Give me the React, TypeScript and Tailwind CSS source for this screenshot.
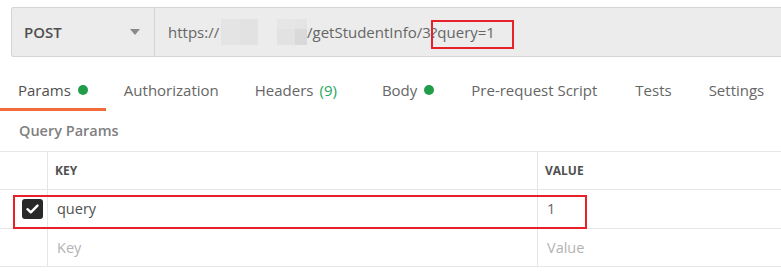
import React from 'react';

const tabs: { label: string; extra?: React.ReactNode; active?: boolean; ml?: string }[] = [
  { label: 'Params', extra: <span className="ml-[7px] inline-block w-[10px] h-[10px] rounded-full bg-[#219c48]" />, active: true },
  { label: 'Authorization' },
  { label: 'Headers', extra: <span className="ml-[6px] text-[#26a65b]">(9)</span> },
  { label: 'Body', extra: <span className="ml-[7px] inline-block w-[10px] h-[10px] rounded-full bg-[#219c48]" />, ml: 'ml-[9px]' },
  { label: 'Pre-request Script', ml: 'ml-[1px]' },
  { label: 'Tests', ml: 'ml-[2px]' },
  { label: 'Settings', ml: 'ml-[1px]' },
];

const App: React.FC = () => {
  return (
    <div className="relative w-[781px] h-[279px] bg-white overflow-hidden text-[#505050]" style={{ fontFamily: '"Open Sans", "Noto Sans", sans-serif' }}>
      {/* request bar */}
      <div className="pt-[7px] pl-[11px]">
        <div className="flex h-[50px] bg-[#ececec] border border-r-0 border-[#d4d4d4] rounded-l-[3px]">
          <div className="w-[143px] flex items-center justify-between pl-[12px] pr-[14px] border-r border-[#d4d4d4]">
            <span className="text-[15px] font-semibold text-[#505050]">POST</span>
            <svg width="10" height="6" viewBox="0 0 10 6"><path d="M0 0h10L5 6z" fill="#8a8a8a" /></svg>
          </div>
          <div className="flex-1 flex items-center pl-[13px] text-[15px] text-[#666]">
            <span className="w-[53px]">https://</span>
            <span className="flex h-[26px]">
              <span className="w-[19px] bg-[#e4e4e4]" />
              <span className="w-[18px] bg-[#e2e2e2]" />
            </span>
            <span className="w-[19px]" />
            <span className="flex h-[26px]">
              <span className="flex flex-col w-[18px]"><span className="h-[10px] bg-[#e6e6e6]" /><span className="flex-1 bg-[#e2e2e2]" /></span>
              <span className="flex flex-col w-[12px]"><span className="h-[10px] bg-[#e4e4e4]" /><span className="flex-1 bg-[#d9d9d9]" /></span>
            </span>
            <span>/getStudentInfo/3?query=1</span>
          </div>
        </div>
      </div>

      {/* tabs */}
      <div className="flex mt-[13px] h-[41px] whitespace-nowrap">
        {tabs.map((t) => (
          <div key={t.label} className={`shrink-0 flex items-center px-[18px] pt-[2px] text-[15px] text-[#666] border-b-[3px] ${t.ml ?? ''} ${t.active ? 'border-[#f26b3a] text-[#505050]' : 'border-transparent'}`}>
            <span>{t.label}</span>
            {t.extra}
          </div>
        ))}
      </div>

      <div className="pl-[19px] pt-[9px] h-[40px] text-[14.5px] font-semibold text-[#808080]">Query Params</div>

      {/* table */}
      <div className="border-t border-[#e6e6e6]">
        <div className="flex h-[38px] border-b border-[#e6e6e6] text-[12px] font-bold text-[#505050]">
          <div className="w-[48px] border-r border-[#e6e6e6]" />
          <div className="w-[490px] border-r border-[#e6e6e6] flex items-center pl-[7px]">KEY</div>
          <div className="flex-1 flex items-center pl-[7px]">VALUE</div>
        </div>
        <div className="flex h-[39px] border-b border-[#e6e6e6] text-[14.5px]">
          <div className="w-[48px] border-r border-[#e6e6e6] flex items-center pl-[22px]">
            <div className="w-[21px] h-[20px] rounded-[3px] bg-[#282828] flex items-center justify-center">
              <svg width="13" height="10" viewBox="0 0 13 10"><path d="M1.5 5.2l3.3 3.1L11.5 1.6" fill="none" stroke="#fff" strokeWidth="2.4" strokeLinecap="round" strokeLinejoin="round" /></svg>
            </div>
          </div>
          <div className="w-[490px] border-r border-[#e6e6e6] flex items-center pl-[9px] text-[#505050]">query</div>
          <div className="flex-1 flex items-center pl-[9px] text-[#666]">1</div>
        </div>
        <div className="flex h-[38px] border-b border-[#e6e6e6] text-[14.5px] text-[#b3b3b3]">
          <div className="w-[48px] border-r border-[#e6e6e6]" />
          <div className="w-[490px] border-r border-[#e6e6e6] flex items-center pl-[9px]">Key</div>
          <div className="flex-1 flex items-center pl-[9px]">Value</div>
        </div>
      </div>

      {/* red annotation boxes */}
      <div className="absolute left-[431px] top-[20px] w-[83px] h-[29px] border-2 border-[#e8202a]" />
      <div className="absolute left-[13px] top-[195px] w-[574px] h-[34px] border-2 border-[#e8202a]" />
    </div>
  );
};

export default App;
